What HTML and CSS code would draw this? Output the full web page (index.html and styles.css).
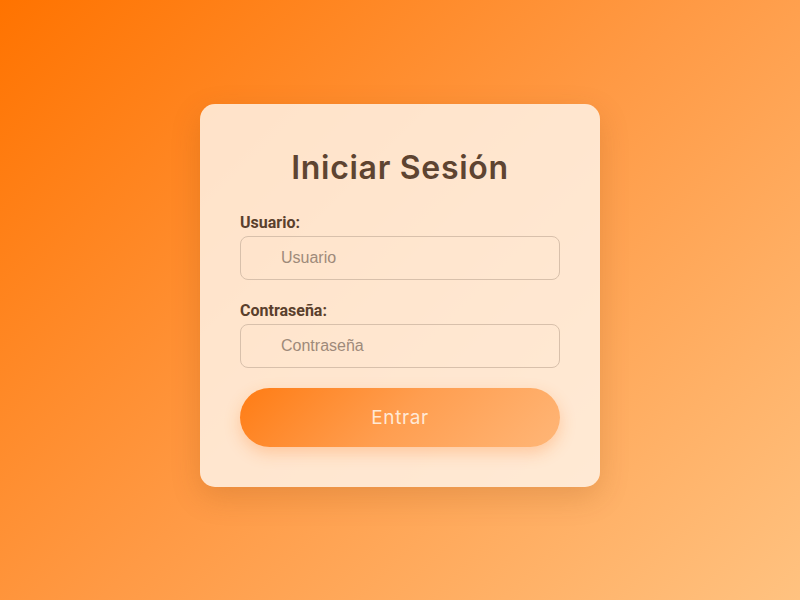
FILE: index.html
```html
<!DOCTYPE html>
<html lang="es">
<head>
<meta charset="utf-8">
<title>Iniciar Sesión</title>
<link rel="stylesheet" href="styles.css">
</head>
<body>
<main class="page">
  <form class="card">
    <h1 class="title">Iniciar Sesión</h1>
    <div class="field">
      <label class="label" for="u">Usuario:</label>
      <input class="input" id="u" type="text" placeholder="Usuario">
    </div>
    <div class="field field-last">
      <label class="label" for="p">Contraseña:</label>
      <input class="input" id="p" type="password" placeholder="Contraseña">
    </div>
    <button class="btn" type="button">Entrar</button>
  </form>
</main>
</body>
</html>
```
FILE: styles.css
```css
* { box-sizing: border-box; }
html, body { margin: 0; height: 100%; }
body {
  background: linear-gradient(135deg, #ff7300 0%, #ff9a45 50%, #ffc280 100%);
  font-family: "Liberation Sans", Arial, sans-serif;
}
.page {
  height: 600px;
  padding-bottom: 9px;
  display: flex;
  align-items: center;
  justify-content: center;
}
.card {
  width: 400px;
  padding: 40px;
  background: rgba(255, 243, 232, 0.85);
  border-radius: 15px;
  box-shadow: 0 10px 30px rgba(120, 60, 10, 0.18);
  display: flex;
  flex-direction: column;
}
.title {
  margin: 0 0 22px;
  font-family: "Inter", sans-serif;
  font-weight: 600;
  font-size: 32px;
  line-height: 48px;
  letter-spacing: 0.7px;
  text-align: center;
  color: #5e4431;
}
.field {
  display: flex;
  flex-direction: column;
  margin-bottom: 22px;
}
.field-last { margin-bottom: 20px; }
.label {
  font-family: "Roboto", sans-serif;
  font-weight: bold;
  font-size: 16px;
  line-height: 18px;
  color: #5a3f2c;
  margin-bottom: 4px;
}
.input {
  height: 44px;
  border: 1px solid #d8c0ab;
  border-radius: 8px;
  background: transparent;
  padding: 0 0 0 40px;
  font-family: "Liberation Sans", Arial, sans-serif;
  font-size: 16px;
  color: #5a3f2c;
}
.input::placeholder { color: #9e8a7a; }
.btn {
  height: 59px;
  border: 0;
  border-radius: 30px;
  background: linear-gradient(135deg, #ff7c14 0%, #ff9e50 50%, #ffb677 100%);
  color: #ffe9d6;
  font-family: "Inter", sans-serif;
  font-size: 19px;
  letter-spacing: 0.6px;
  box-shadow: 0 6px 16px rgba(255, 130, 40, 0.3);
  cursor: pointer;
}
```
